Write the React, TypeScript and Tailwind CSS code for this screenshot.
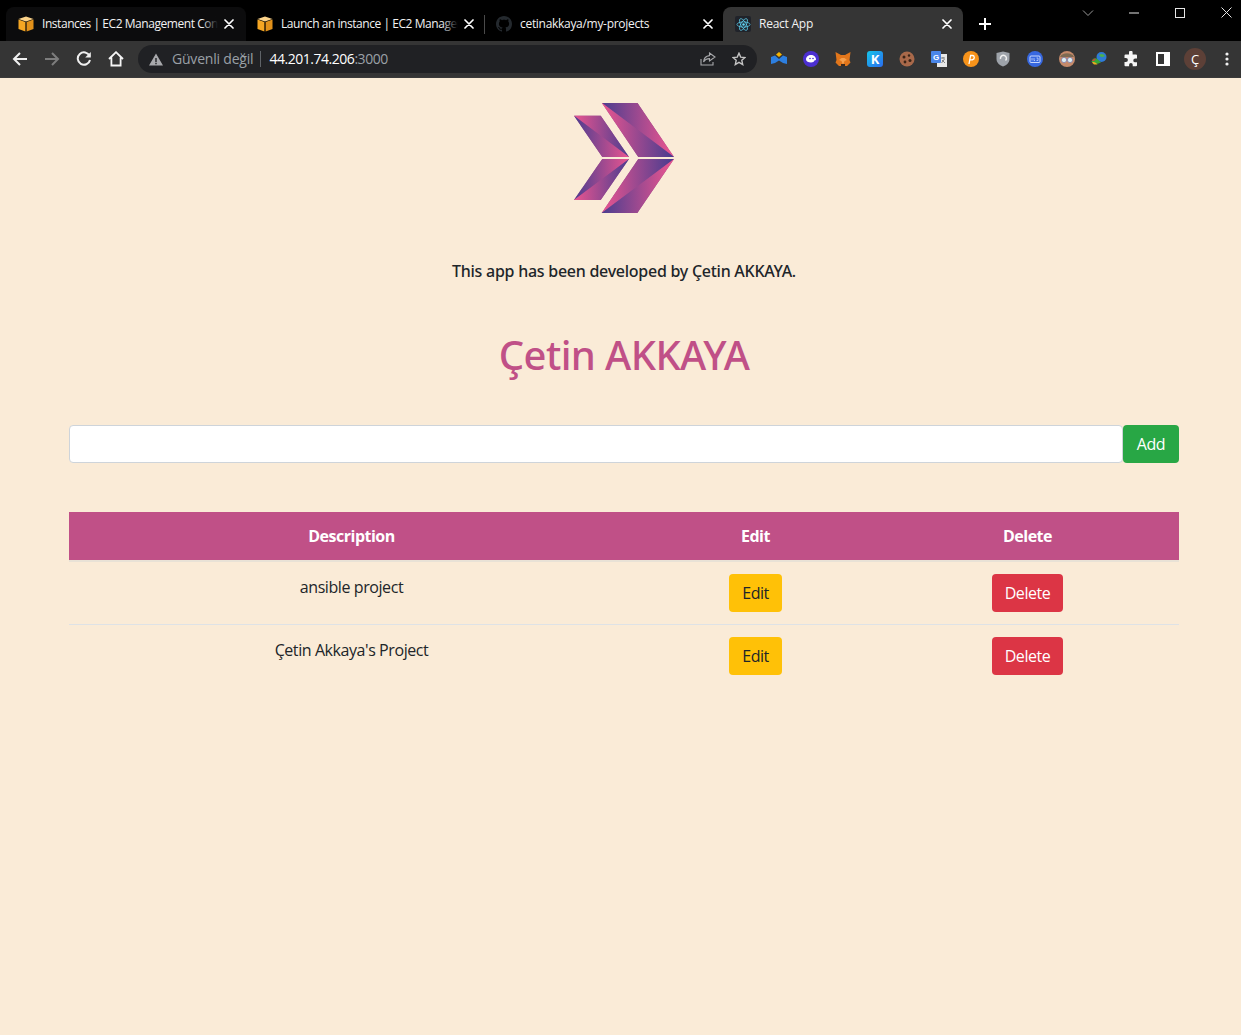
import React from "react";

const sans = "font-['Open_Sans','Noto_Sans',sans-serif]";
const noto = "font-['Noto_Sans','Open_Sans',sans-serif]";

function Cube() {
  return (
    <svg width="16" height="16" viewBox="0 0 16 16" className="shrink-0">
      <path d="M8 0.5 L15.5 3 L8 5.6 L0.5 3Z" fill="#fbd38a" />
      <path d="M0.5 3.6 L7.4 6 V15.5 L0.5 13Z" fill="#f5a623" />
      <path d="M15.5 3.6 L8.6 6 V15.5 L15.5 13Z" fill="#e2911a" />
    </svg>
  );
}
function GitHubMark() {
  return (
    <svg width="16" height="16" viewBox="0 0 16 16" className="shrink-0" fill="#24292e">
      <path d="M8 0C3.58 0 0 3.58 0 8c0 3.54 2.29 6.53 5.47 7.59.4.07.55-.17.55-.38 0-.19-.01-.82-.01-1.49-2.01.37-2.53-.49-2.69-.94-.09-.23-.48-.94-.82-1.13-.28-.15-.68-.52-.01-.53.63-.01 1.08.58 1.23.82.72 1.21 1.87.87 2.33.66.07-.52.28-.87.51-1.07-1.78-.2-3.64-.89-3.64-3.95 0-.87.31-1.59.82-2.15-.08-.2-.36-1.02.08-2.12 0 0 .67-.21 2.2.82.64-.18 1.32-.27 2-.27s1.36.09 2 .27c1.53-1.04 2.2-.82 2.2-.82.44 1.1.16 1.92.08 2.12.51.56.82 1.27.82 2.15 0 3.07-1.87 3.75-3.65 3.95.29.25.54.73.54 1.48 0 1.07-.01 1.93-.01 2.2 0 .21.15.46.55.38A8 8 0 0 0 16 8c0-4.42-3.58-8-8-8z" />
    </svg>
  );
}
function ReactIcon() {
  return (
    <span className="flex h-[16px] w-[16px] shrink-0 items-center justify-center rounded-[2px] bg-[#20232a]">
      <svg width="15" height="15" viewBox="-12 -12 24 24" fill="none" stroke="#61dafb" strokeWidth="1.1">
        <circle r="2" fill="#61dafb" stroke="none" />
        <ellipse rx="10.5" ry="4.2" />
        <ellipse rx="10.5" ry="4.2" transform="rotate(60)" />
        <ellipse rx="10.5" ry="4.2" transform="rotate(120)" />
      </svg>
    </span>
  );
}
function X() {
  return (
    <svg width="10" height="10" viewBox="0 0 10 10" className="shrink-0" stroke="#fff" strokeWidth="1.7" strokeLinecap="round">
      <path d="M1 1 L9 9 M9 1 L1 9" />
    </svg>
  );
}

function Tab({ icon, title, bg, box, track, fade }: { icon: React.ReactNode; title: string; bg: string; box: string; track: string; fade?: string }) {
  return (
    <div className={`relative flex h-[34px] items-center ${box} ${bg}`}>
      {icon}
      <span className={`relative ml-[8px] mr-[6px] min-w-0 flex-1 overflow-hidden whitespace-nowrap text-[12px] leading-[16px] text-[#f2f2f2] ${track} ${sans}`}>
        {title}
        {fade && <span className={`absolute bottom-0 right-0 top-0 w-[16px] bg-gradient-to-r from-transparent ${fade}`} />}
      </span>
      <X />
    </div>
  );
}

function Ext({ children }: { children: React.ReactNode }) {
  return <div className="flex h-[20px] w-[32px] shrink-0 items-center justify-center">{children}</div>;
}

function Logo() {
  return (
    <svg width="100" height="110" viewBox="574 103 100 110" className="block">
      <defs>
        <linearGradient id="bp" gradientUnits="userSpaceOnUse" x1="602" y1="0" x2="672" y2="0">
          <stop offset="0" stopColor="#4a3d8f" />
          <stop offset="1" stopColor="#ea5590" />
        </linearGradient>
        <linearGradient id="pb" gradientUnits="userSpaceOnUse" x1="602" y1="0" x2="672" y2="0">
          <stop offset="0" stopColor="#ea5590" />
          <stop offset="1" stopColor="#4a3d8f" />
        </linearGradient>
        <linearGradient id="sbp" gradientUnits="userSpaceOnUse" x1="574" y1="0" x2="629" y2="0">
          <stop offset="0" stopColor="#4a3d8f" />
          <stop offset="1" stopColor="#ea5590" />
        </linearGradient>
        <linearGradient id="spb" gradientUnits="userSpaceOnUse" x1="574" y1="0" x2="629" y2="0">
          <stop offset="0" stopColor="#ea5590" />
          <stop offset="1" stopColor="#4a3d8f" />
        </linearGradient>
      </defs>
      <g fill="#984a8c">
        <polygon points="601.7,102.7 637.3,102.7 674,157 638.3,157" />
        <polygon points="638.3,159 674,159 637.3,213 601.7,213" />
        <polygon points="574,115.7 600.7,115.7 629,157 602.3,157" />
        <polygon points="602.3,159 629,159 600.7,200 574,200" />
      </g>
      <polygon points="601.7,102.7 637.3,102.7 674,157 " fill="url(#bp)" />
      <polygon points="601.7,102.7 674,157 638.3,157" fill="url(#pb)" />
      <polygon points="638.3,159 674,159 601.7,213" fill="url(#pb)" />
      <polygon points="601.7,213 674,159 637.3,213" fill="url(#bp)" />
      <polygon points="574,115.7 600.7,115.7 629,157" fill="url(#spb)" />
      <polygon points="574,115.7 629,157 602.3,157" fill="url(#sbp)" />
      <polygon points="602.3,159 629,159 574,200" fill="url(#sbp)" />
      <polygon points="574,200 629,159 600.7,200" fill="url(#spb)" />
    </svg>
  );
}

function Btn({ color, children }: { color: string; children: React.ReactNode }) {
  return <button className={`inline-block h-[38px] rounded-[4px] text-[16px] leading-[24px] tracking-[-0.45px] ${color} ${sans}`}>{children}</button>;
}

export default function App() {
  return (
    <div className={`flex min-h-screen flex-col bg-[#faebd7] text-[#212529] ${sans}`}>
      {/* tab strip */}
      <div className="flex h-[41px] items-end bg-black pl-[6px]">
        <Tab box="w-[240px] pl-[12px] pr-[12px] rounded-t-[8px]" bg="bg-[#0c0c0d]" track="tracking-[-0.45px]" fade="to-[#0c0c0d]" icon={<Cube />} title="Instances | EC2 Management Console" />
        <Tab box="w-[239px] pl-[11px] pr-[11px]" bg="" track="tracking-[-0.45px]" fade="to-black" icon={<Cube />} title="Launch an instance | EC2 Management Console" />
        <div className="mb-[7px] h-[19px] w-px shrink-0 self-end bg-[#4a4a4a] ml-[-1px]" />
        <Tab box="w-[238px] pl-[11px] pr-[10px]" bg="" track="tracking-[-0.3px]" icon={<GitHubMark />} title="cetinakkaya/my-projects" />
        <Tab box="w-[240px] pl-[12px] pr-[11px] rounded-t-[8px]" bg="bg-[#353535]" track="tracking-[-0.25px]" icon={<ReactIcon />} title="React App" />
        <div className="ml-[15px] mb-[10px] flex h-[14px] w-[14px] items-center justify-center">
          <svg width="12" height="12" viewBox="0 0 12 12" stroke="#fff" strokeWidth="2"><path d="M6 0V12M0 6H12" /></svg>
        </div>
        <div className="ml-auto flex h-[41px] self-start">
          <div className="flex h-[25px] w-[46px] items-center justify-center">
            <svg width="12" height="8" viewBox="0 0 12 8" fill="none" stroke="#9a9a9a" strokeWidth="1"><path d="M1 1.5L6 6.5L11 1.5" /></svg>
          </div>
          <div className="flex h-[25px] w-[46px] items-center justify-center">
            <svg width="10" height="2" viewBox="0 0 10 2" stroke="#e6e6e6" strokeWidth="1"><path d="M0 1H10" /></svg>
          </div>
          <div className="flex h-[25px] w-[46px] items-center justify-center">
            <svg width="10" height="10" viewBox="0 0 10 10" fill="none" stroke="#e6e6e6" strokeWidth="1"><rect x="0.5" y="0.5" width="9" height="9" /></svg>
          </div>
          <div className="ml-[8px] flex h-[25px] w-[30px] items-center justify-center">
            <svg width="11" height="11" viewBox="0 0 11 11" fill="none" stroke="#e6e6e6" strokeWidth="1"><path d="M0.5 0.5L10.5 10.5M10.5 0.5L0.5 10.5" /></svg>
          </div>
        </div>
      </div>

      {/* toolbar */}
      <div className="flex h-[37px] items-center overflow-hidden border-b border-[#3a3a3a] bg-[#353535] pl-[4px]">
        <div className="flex w-[32px] shrink-0 justify-center">
          <svg width="16" height="14" viewBox="0 0 16 14" fill="none" stroke="#f0f0f0" strokeWidth="2"><path d="M15 7H2M8 1L2 7L8 13" /></svg>
        </div>
        <div className="flex w-[32px] shrink-0 justify-center">
          <svg width="16" height="14" viewBox="0 0 16 14" fill="none" stroke="#7d7d7d" strokeWidth="2"><path d="M1 7H14M8 1L14 7L8 13" /></svg>
        </div>
        <div className="flex w-[32px] shrink-0 justify-center">
          <svg width="16" height="16" viewBox="0 0 16 16" fill="none" stroke="#f0f0f0" strokeWidth="2"><path d="M13.6 5A6.2 6.2 0 1 0 14 9" /><path d="M14.8 1V6.6H9.2" fill="#f0f0f0" stroke="none" /></svg>
        </div>
        <div className="flex w-[32px] shrink-0 justify-center">
          <svg width="16" height="16" viewBox="0 0 16 16" fill="none" stroke="#f5f5f5" strokeWidth="1.8"><path d="M1 8L8 1.2L15 8M3.4 6.4V14.5H12.6V6.4" /></svg>
        </div>
        <div className="ml-[6px] flex h-[28px] w-[619px] shrink-0 items-center rounded-[14px] bg-[#202124] pl-[11px] pr-[11px]">
          <svg width="14" height="13" viewBox="0 0 14 13" className="shrink-0"><path fillRule="evenodd" d="M7 0.5L14 12.5H0ZM6.3 5V9H7.7V5ZM6.3 9.8V11.2H7.7V9.8Z" fill="#a8a9ac" /></svg>
          <span className={`ml-[9px] text-[14px] leading-[20px] tracking-[-0.2px] text-[#9aa0a6] ${sans}`}>Güvenli değil</span>
          <span className="ml-[7px] h-[16px] w-px bg-[#5f6368]" />
          <span className={`ml-[8px] text-[14px] leading-[20px] tracking-[-0.47px] text-white ${sans}`}>44.201.74.206<span className="text-[#9aa0a6]">:3000</span></span>
          <div className="ml-auto flex items-center gap-[16px]">
            <svg width="16" height="14" viewBox="0 0 16 14" fill="none" stroke="#a8a9ac" strokeWidth="1.1"><path d="M1 7V13H13V10M9.5 1L15 5L9.5 9V6.6C6.5 6.6 4.8 7.6 3.6 10C3.8 6.6 6 4 9.5 3.6Z" /></svg>
            <svg width="14" height="14" viewBox="0 0 14 14" fill="none" stroke="#c4c4c4" strokeWidth="1.4"><path d="M7 1.2L8.7 5.1L13 5.5L9.8 8.3L10.7 12.5L7 10.3L3.3 12.5L4.2 8.3L1 5.5L5.3 5.1Z" /></svg>
          </div>
        </div>
        <div className="ml-[6px] flex shrink-0 items-center">
          <Ext><svg width="16" height="14" viewBox="0 0 16 14"><path d="M8 0L11 2.5L8 5L5 2.5Z" fill="#f5b400" /><path d="M0 5L4 3.5L8 7L12 3.5L16 5V12L12 11L8 8.5L4 11L0 12Z" fill="#2d7fe0" /></svg></Ext>
          <Ext><svg width="16" height="16" viewBox="0 0 16 16"><circle cx="8" cy="8" r="8" fill="#4b2fd0" /><path d="M3 8.5C3 5.8 5.2 4 8 4C10.8 4 13 6 13 8.5C13 9.5 12 9 11.5 9.5C11 10.5 10 11.5 8 11.5C5.5 11.5 3 10.5 3 8.5Z" fill="#fff" /><circle cx="7" cy="7.5" r="0.8" fill="#4b2fd0" /><circle cx="10" cy="7.5" r="0.8" fill="#4b2fd0" /></svg></Ext>
          <Ext><svg width="16" height="16" viewBox="0 0 16 16"><path d="M0.5 1L6 4H10L15.5 1L14.5 9L15.5 11.5L12 15H4L0.5 11.5L1.5 9Z" fill="#e2761b" /><path d="M4 9L6.5 10L8 14L9.5 10L12 9L9.5 7H6.5Z" fill="#f6a04d" /><path d="M6 13H10V15H6Z" fill="#3a2a1f" /></svg></Ext>
          <Ext><div className="flex h-[16px] w-[16px] items-center justify-center rounded-[3px] bg-[linear-gradient(135deg,#15c5e8,#2a6cf0)] text-[13px] font-bold leading-none text-white">K</div></Ext>
          <Ext><svg width="16" height="16" viewBox="0 0 16 16"><circle cx="8" cy="8" r="7.5" fill="#a9694a" /><circle cx="5" cy="6" r="1.5" fill="#3b2417" /><circle cx="10" cy="4.5" r="1.2" fill="#3b2417" /><circle cx="11" cy="9.5" r="1.5" fill="#3b2417" /><circle cx="6" cy="11" r="1.4" fill="#3b2417" /></svg></Ext>
          <Ext><svg width="16" height="16" viewBox="0 0 16 16"><rect x="6" y="3" width="10" height="13" fill="#e8e8e8" /><path d="M10 7H14M12 6V7.5M10.5 12L13.5 8M11 9L14 12" stroke="#777" strokeWidth="0.9" fill="none" /><rect x="0" y="0" width="10" height="12" rx="1" fill="#4a86e8" /><text x="5" y="9" textAnchor="middle" fontSize="8" fontWeight="700" fill="#fff" fontFamily="'Liberation Sans',sans-serif">G</text></svg></Ext>
          <Ext><svg width="16" height="16" viewBox="0 0 16 16"><circle cx="8" cy="8" r="8" fill="#f7931a" /><path d="M6 13L7.6 4.5H9.5C11.6 4.5 12 7.8 9.8 8.6C9 8.9 8 8.8 7.2 8.6" fill="none" stroke="#fff" strokeWidth="1.3" /></svg></Ext>
          <Ext><svg width="14" height="16" viewBox="0 0 14 16"><path d="M0.5 2L7 0.5L13.5 2V8C13.5 12 10 14.5 7 15.5C4 14.5 0.5 12 0.5 8Z" fill="#9ea3aa" /><path d="M4.5 8A3 3 0 1 1 9.5 9.5" fill="none" stroke="#f0f0f0" strokeWidth="1.5" /></svg></Ext>
          <Ext><svg width="16" height="16" viewBox="0 0 16 16"><circle cx="8" cy="8" r="8" fill="#3768e0" /><rect x="3" y="5" width="10" height="6.5" rx="1" fill="none" stroke="#d8e4ff" strokeWidth="0.9" /><path d="M5 7V9.5M7 7V9.5H8M9.5 7H11V9.5H9.5" stroke="#d8e4ff" strokeWidth="0.7" fill="none" /></svg></Ext>
          <Ext><svg width="16" height="16" viewBox="0 0 16 16"><circle cx="8" cy="8" r="8" fill="#c58a6a" /><path d="M1 6C3 1 13 1 15 6Z" fill="#7e6a52" /><circle cx="5" cy="9" r="2.6" fill="#dbeef0" stroke="#66a" strokeWidth="0.6" /><circle cx="11" cy="9" r="2.6" fill="#dbeef0" stroke="#66a" strokeWidth="0.6" /></svg></Ext>
          <Ext><svg width="16" height="16" viewBox="0 0 16 16"><circle cx="10.5" cy="6" r="5" fill="#2e7bd6" /><path d="M8 4C10 2 13 3 14 5C12 6 10 7 8 4Z" fill="#4caf50" /><path d="M0.5 11C1 7.5 4 6 7 8.5L10 11.5L6 13C4 11.5 2.5 11 0.5 11Z" fill="#38a638" /><path d="M1 11.5C3 10.5 5 11.5 6.5 13.5L3 13.5Z" fill="#e8b020" /><path d="M1 10C2 8 3.5 7.5 5 7.7L3 10Z" fill="#d63b3b" /></svg></Ext>
          <Ext><svg width="16" height="16" viewBox="0 0 16 16" fill="#f5f5f5"><path d="M6 1.5A1.8 1.8 0 0 1 9.6 1.5V3.5H13A1 1 0 0 1 14 4.5V7.5H12.2A1.9 1.9 0 0 0 12.2 11.3H14V14.2A1 1 0 0 1 13 15.2H9.7V13.8A1.8 1.8 0 0 0 6.1 13.8V15.2H2.5A1 1 0 0 1 1.5 14.2V11H2.9A2 2 0 0 0 2.9 7H1.5V4.5A1 1 0 0 1 2.5 3.5H6Z" /></svg></Ext>
          <Ext><svg width="14" height="14" viewBox="0 0 14 14"><path fillRule="evenodd" d="M0 0H14V14H0ZM2 2V12H8V2Z" fill="#fff" /></svg></Ext>
          <Ext><div className="flex h-[22px] w-[22px] shrink-0 items-center justify-center rounded-full bg-[#5d4037] text-[13px] leading-none text-white">Ç</div></Ext>
          <Ext><svg width="4" height="14" viewBox="0 0 4 14" fill="#f0f0f0"><circle cx="2" cy="2" r="1.6" /><circle cx="2" cy="7" r="1.6" /><circle cx="2" cy="12" r="1.6" /></svg></Ext>
        </div>
      </div>

      {/* page */}
      <main className="ml-[54px] w-[1140px] px-[15px] pt-[25px]">
        <div className="flex justify-center"><Logo /></div>
        <p className={`mt-[46px] text-center text-[16px] font-medium leading-[24px] tracking-[-0.26px] text-[#212529] ${noto}`}>This app has been developed by Çetin AKKAYA.</p>
        <h1 className={`mt-[48px] text-center text-[40px] font-medium leading-[48px] tracking-[-0.6px] text-[#c05087] ${noto}`}>Çetin AKKAYA</h1>
        <div className="mt-[46px] flex h-[38px]">
          <input className="h-[38px] flex-1 rounded-[4px] border border-[#ced4da] bg-white" />
          <button className="h-[38px] w-[56px] rounded-[4px] bg-[#28a745] text-[16px] tracking-[-0.4px] text-white">Add</button>
        </div>
        <table className="mt-[49px] w-full table-fixed border-separate border-spacing-0">
          <colgroup>
            <col className="w-[565px]" />
            <col className="w-[243px]" />
            <col className="w-[302px]" />
          </colgroup>
          <thead>
            <tr className="bg-[#c05087] text-[16px] font-bold tracking-[-0.5px] text-white">
              <th className="h-[50px] border-b-2 border-[#e9e2d6]">Description</th>
              <th className="h-[50px] border-b-2 border-[#e9e2d6]">Edit</th>
              <th className="h-[50px] border-b-2 border-[#e9e2d6] pr-[1px]">Delete</th>
            </tr>
          </thead>
          <tbody className="text-center text-[16px] leading-[24px] tracking-[-0.42px]">
            <tr>
              <td className="border-b border-[#dee2e6] px-[12px] pb-[12px] pt-[13px] align-top">ansible project</td>
              <td className="border-b border-[#dee2e6] p-[12px] align-top"><Btn color="w-[53px] bg-[#ffc107] text-[#212529]">Edit</Btn></td>
              <td className="border-b border-[#dee2e6] pb-[12px] pl-[12px] pr-[13px] pt-[12px] align-top"><Btn color="w-[71px] bg-[#dc3545] text-white">Delete</Btn></td>
            </tr>
            <tr>
              <td className="px-[12px] pb-[12px] pt-[13px] align-top">Çetin Akkaya's Project</td>
              <td className="p-[12px] align-top"><Btn color="w-[53px] bg-[#ffc107] text-[#212529]">Edit</Btn></td>
              <td className="pb-[12px] pl-[12px] pr-[13px] pt-[12px] align-top"><Btn color="w-[71px] bg-[#dc3545] text-white">Delete</Btn></td>
            </tr>
          </tbody>
        </table>
      </main>
    </div>
  );
}
